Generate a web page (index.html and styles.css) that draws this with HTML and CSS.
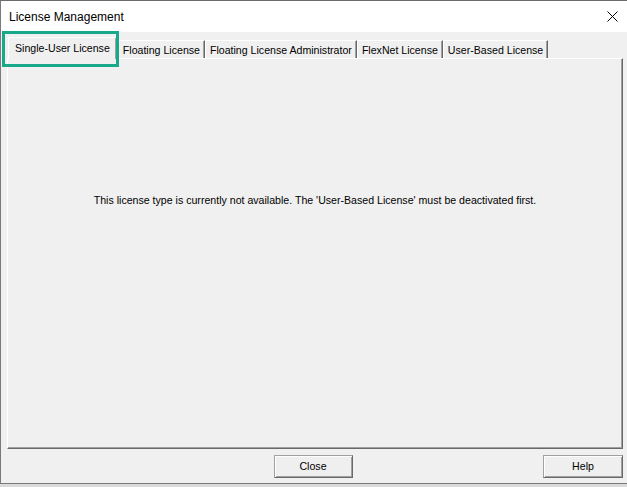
FILE: index.html
```html
<!DOCTYPE html>
<html lang="en">
<head>
    <meta charset="UTF-8">
    <meta name="viewport" content="width=device-width, initial-scale=1.0">
    <title>License Management</title>
    <link rel="stylesheet" href="styles.css">
</head>
<body>
    <div class="window">
        <div class="titlebar">
            <span class="title">License Management</span>
            <span class="close-x">
                <svg width="11" height="11" viewBox="0 0 11 11">
                    <path d="M0.5 0.5 L10.5 10.5 M10.5 0.5 L0.5 10.5" stroke="#000" stroke-width="1" fill="none"/>
                </svg>
            </span>
        </div>
        <div class="content">
            <div class="tabs">
                <div class="tab active">Single-User License</div>
                <div class="tab">Floating License</div>
                <div class="tab">Floating License Administrator</div>
                <div class="tab">FlexNet License</div>
                <div class="tab">User-Based License</div>
                <span class="highlight"></span>
            </div>
            <div class="panel">
                <p class="notice">This license type is currently not available. The 'User-Based License' must be deactivated first.</p>
            </div>
            <div class="footer">
                <span></span>
                <button class="btn">Close</button>
                <button class="btn help">Help</button>
            </div>
        </div>
    </div>
</body>
</html>
```

FILE: styles.css
```css
html {
    background: #dadada;
}
body {
    margin: 0;
    font-family: "Liberation Sans", Arial, sans-serif;
    font-size: 10.6px;
    color: #000;
}
.window {
    width: 627px;
    height: 484px;
    box-sizing: border-box;
    background: #f0f0f0;
    border-top: 1px solid #6a6a6a;
    border-left: 1px solid #7a7a7a;
    border-bottom: 1px solid #7a7a7a;
    display: flex;
    flex-direction: column;
}
.titlebar {
    height: 31px;
    background: #fff;
    display: flex;
    align-items: center;
    justify-content: space-between;
    padding: 0 9px 0 8px;
}
.title {
    font-size: 12px;
    color: #000;
}
.close-x {
    display: flex;
    margin-top: -1px;
}
.content {
    flex: 1;
    padding: 5px 4px 5px 6px;
    display: flex;
    flex-direction: column;
}
.tabs {
    position: relative;
    display: flex;
    align-items: flex-end;
    height: 21px;
    padding-left: 1px;
}
.tab {
    height: 18px;
    box-sizing: border-box;
    padding: 2px 4px 0 4px;
    line-height: 14px;
    white-space: nowrap;
    border-top: 1px solid #fff;
    border-left: 1px solid #fff;
    border-right: 1px solid #696969;
    box-shadow: inset -1px 0 #a0a0a0;
    background: #f0f0f0;
}
.tab.active {
    position: relative;
    z-index: 1;
    height: 22px;
    margin-bottom: -1px;
    margin-right: 1px;
    padding: 3px 6px 0 6px;
}
.highlight {
    position: absolute;
    left: -5px;
    top: -6px;
    width: 117px;
    height: 36px;
    box-sizing: border-box;
    border: 3px solid #18a88a;
    z-index: 2;
}
.panel {
    height: 391px;
    box-sizing: border-box;
    border-top: 1px solid #fff;
    border-left: 1px solid #fff;
    border-right: 1px solid #696969;
    border-bottom: 1px solid #696969;
    box-shadow: inset -1px -1px #a0a0a0;
    padding-top: 135px;
}
.notice {
    margin: 0;
    text-align: center;
    line-height: 13px;
}
.footer {
    margin-top: 6px;
    display: grid;
    grid-template-columns: 1fr auto 1fr;
    align-items: start;
}
.btn {
    width: 79px;
    height: 23px;
    font-family: "Liberation Sans", Arial, sans-serif;
    font-size: 10.6px;
    color: #000;
    background: #efefef;
    border: 1px solid #a0a0a0;
    border-right-color: #696969;
    border-bottom-color: #696969;
    box-shadow: inset 1px 1px #fff, inset -1px -1px #a0a0a0;
    padding: 0 0 1px;
    margin-left: -4px;
}
.help {
    justify-self: end;
    width: 80px;
    margin-left: 0;
}
```
